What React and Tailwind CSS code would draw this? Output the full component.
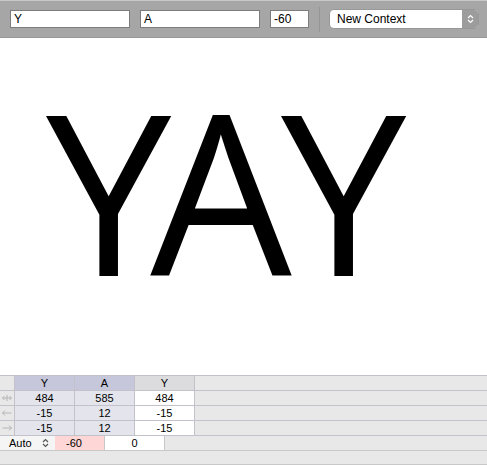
import React from 'react';

const font = { fontFamily: '"Liberation Sans", Arial, sans-serif' };

const Chevrons = ({ className = '' }) => (
  <svg width="7" height="10" viewBox="0 0 7 10" className={className}>
    <path d="M1 4 L3.5 1.5 L6 4 M1 6 L3.5 8.5 L6 6" fill="none" stroke="currentColor" strokeWidth="1.2" />
  </svg>
);

const GutterIcon = ({ kind }) => (
  <svg width="10" height="8" viewBox="0 0 10 8" className="text-[#b5b5b5]">
    {kind === 'both' && (
      <path d="M0.5 4 H9.5 M5 1 V7 M2.5 2 L0.5 4 L2.5 6 M7.5 2 L9.5 4 L7.5 6" fill="none" stroke="currentColor" strokeWidth="1" />
    )}
    {kind === 'left' && (
      <path d="M0.5 4 H9.5 M3 1.5 L0.5 4 L3 6.5" fill="none" stroke="currentColor" strokeWidth="1" />
    )}
    {kind === 'right' && (
      <path d="M0.5 4 H9.5 M7 1.5 L9.5 4 L7 6.5" fill="none" stroke="currentColor" strokeWidth="1" />
    )}
  </svg>
);

const rows = [
  { icon: 'both', values: ['484', '585', '484'] },
  { icon: 'left', values: ['-15', '12', '-15'] },
  { icon: 'right', values: ['-15', '12', '-15'] },
];

export default function App() {
  return (
    <div className="w-[487px] h-[465px] flex flex-col bg-white overflow-hidden" style={font}>
      {/* toolbar */}
      <div className="h-[38px] bg-[#a6a6a6] border-t border-t-[#c8c8c8] border-b border-b-[#999] flex items-center pl-[10px] gap-[10px] text-[12px] text-black">
        <div className="w-[120px] h-[18px] bg-white border border-[#7d7d7d] px-[3px] flex items-center">Y</div>
        <div className="w-[120px] h-[18px] bg-white border border-[#7d7d7d] px-[3px] flex items-center">A</div>
        <div className="w-[39px] h-[18px] bg-white border border-[#7d7d7d] px-[3px] flex items-center">-60</div>
        <div className="w-px h-[25px] bg-[#959595]" />
        <div className="w-[148px] h-[18px] bg-white rounded-[4px] flex items-center shadow-[0_0_0_0.5px_#8a8a8a] overflow-hidden">
          <span className="flex-1 pl-[7px]">New Context</span>
          <div className="w-[16px] h-full bg-[#9c9c9c] flex items-center justify-center text-white">
            <Chevrons />
          </div>
        </div>
      </div>

      {/* canvas */}
      <div className="flex-1 flex items-start pl-[46px] pt-[40px]">
        <div className="flex text-[224px] leading-none text-black" style={{ fontFamily: '"Open Sans", sans-serif' }}>
          <span>Y</span>
          <span className="-ml-[21px]">A</span>
          <span className="-ml-[11px]">Y</span>
        </div>
      </div>

      {/* table */}
      <div className="border-t border-[#c3c2cb] text-[11px] text-black">
        <div className="h-[15px] flex border-b border-[#c3c2cb] bg-[#e8e8e8]">
          <div className="w-[15px] border-r border-[#c3c2cb]" />
          <div className="w-[60px] border-r border-[#c3c2cb] bg-[#c6c7da] flex items-center justify-center">Y</div>
          <div className="w-[60px] border-r border-[#c3c2cb] bg-[#c6c7da] flex items-center justify-center">A</div>
          <div className="w-[60px] border-r border-[#c3c2cb] bg-[#dcdcdf] flex items-center justify-center">Y</div>
        </div>
        {rows.map((row, i) => (
          <div key={i} className="h-[15px] flex border-b border-[#c3c2cb] bg-[#e8e8e8]">
            <div className="w-[15px] border-r border-[#c3c2cb] flex items-center justify-center">
              <GutterIcon kind={row.icon} />
            </div>
            <div className="w-[60px] border-r border-[#c3c2cb] bg-[#e3e4ec] flex items-center justify-center">{row.values[0]}</div>
            <div className="w-[60px] border-r border-[#c3c2cb] bg-[#e3e4ec] flex items-center justify-center">{row.values[1]}</div>
            <div className="w-[60px] border-r border-[#c3c2cb] bg-white flex items-center justify-center">{row.values[2]}</div>
          </div>
        ))}
        <div className="h-[15px] flex border-b border-[#c8c8c8] bg-[#e8e8e8]">
          <div className="w-[55px] bg-[#f5f5f5] flex items-center pl-[9px] pr-[6px]">
            <span className="flex-1">Auto</span>
            <Chevrons className="text-[#555]" />
          </div>
          <div className="w-[50px] border-r border-[#c8c8c8] bg-[#ffd6d6] flex items-center pl-[11px]">-60</div>
          <div className="w-[60px] border-r border-[#c8c8c8] bg-white flex items-center justify-center">0</div>
        </div>
        <div className="h-[14px] bg-[#e8e8e8] border-b border-[#c8c8c8]" />
      </div>
    </div>
  );
}
